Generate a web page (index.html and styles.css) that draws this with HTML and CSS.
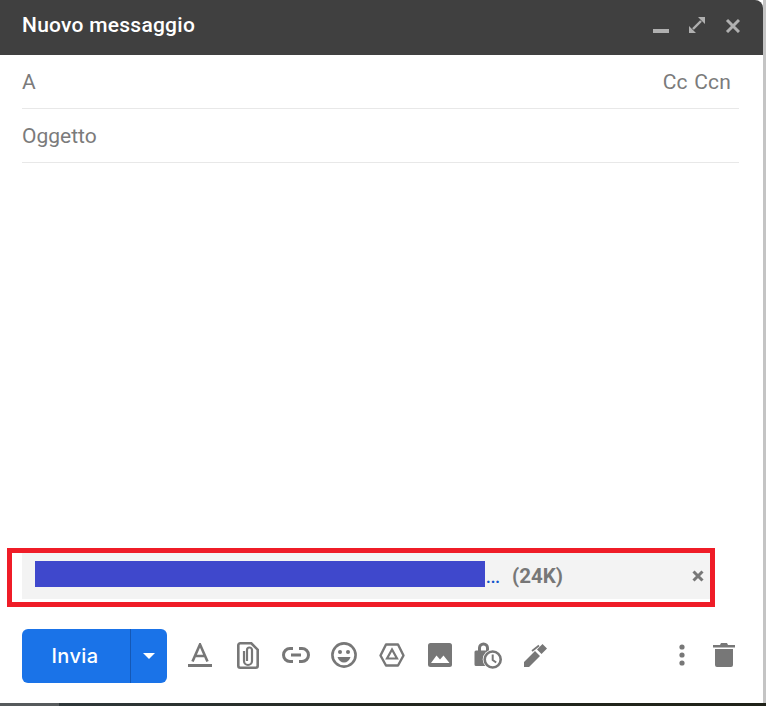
FILE: index.html
```html
<!DOCTYPE html>
<html lang="it">
<head>
<meta charset="utf-8">
<title>Nuovo messaggio</title>
<link rel="stylesheet" href="styles.css">
</head>
<body>
<div class="compose">
  <header class="titlebar">
    <span class="title">Nuovo messaggio</span>
    <div class="winbtns">
      <svg class="ic" width="16" height="16" viewBox="0 0 16 16"><rect x="0" y="12" width="16" height="4" fill="#b0b0b0"/></svg>
      <svg class="ic" width="16" height="16" viewBox="0 0 16 16"><path d="M9 0h7v7zM0 9v7h7z" fill="#b0b0b0"/><path d="M12 4l-8 8" stroke="#b0b0b0" stroke-width="2.400" fill="none"/></svg>
      <svg class="ic" width="15" height="16" viewBox="0 0 15 16"><path d="M2 3l12 12M14 3L2 15" stroke="#b0b0b0" stroke-width="3" fill="none"/></svg>
    </div>
  </header>
  <div class="fields">
    <div class="field"><span>A</span><span class="cc">Cc Ccn</span></div>
    <div class="field"><span>Oggetto</span></div>
  </div>
  <div class="body"></div>
  <div class="highlight">
    <div class="attachment">
      <span class="redact"></span>
      <span class="dots">...</span>
      <span class="size">(24K)</span>
      <svg class="att-x" width="12" height="12" viewBox="0 0 12 12"><path d="M1.500 1.500l9 9M10.500 1.500l-9 9" stroke="#777" stroke-width="3" fill="none"/></svg>
    </div>
  </div>
  <div class="toolbar">
    <div class="send"><span class="send-l">Invia</span><span class="send-r"><i class="caret"></i></span></div>
    <div class="tools">
      <span class="slot"><svg class="ic" width="24" height="24" viewBox="0 0 24 24"><path d="M0 21h24v3H0z" fill="#777"/><path d="M4.500 18.500L12 1.500l7.500 17M7.500 13h9" stroke="#777" stroke-width="2.600" fill="none"/></svg></span>
      <span class="slot"><svg class="ic" width="22" height="27" viewBox="0 0 22 27"><path d="M1.300 3.300a2 2 0 0 1 2-2h11l6.400 6.400v16a2 2 0 0 1-2 2H3.300a2 2 0 0 1-2-2z" fill="none" stroke="#777" stroke-width="2.600"/><path d="M7 9v10a4 4 0 0 0 8 0V8a2.500 2.500 0 0 0-5 0v11" fill="none" stroke="#777" stroke-width="2.200"/></svg></span>
      <span class="slot"><svg class="ic" width="28" height="16" viewBox="0 0 28 16"><path d="M11 1.500H8a6.500 6.500 0 0 0 0 13h3M17 1.500h3a6.500 6.500 0 0 1 0 13h-3M9 8h10" fill="none" stroke="#777" stroke-width="3"/></svg></span>
      <span class="slot"><svg class="ic" width="26" height="26" viewBox="0 0 26 26"><circle cx="13" cy="13" r="11.600" fill="none" stroke="#777" stroke-width="2.600"/><circle cx="9" cy="10" r="2" fill="#777"/><circle cx="17" cy="10" r="2" fill="#777"/><path d="M6.500 15h13c-1 3.500-3.500 5.500-6.500 5.500s-5.500-2-6.500-5.500z" fill="#777"/></svg></span>
      <span class="slot"><svg class="ic" width="26" height="24" viewBox="0 0 26 24"><path d="M7 1.500h12l5.500 11-5.500 10H7l-5.500-10z" fill="none" stroke="#777" stroke-width="2.400" stroke-linejoin="round"/><path d="M13 6.500l-5 9h10z" fill="none" stroke="#777" stroke-width="2.200"/></svg></span>
      <span class="slot"><svg class="ic" width="24" height="24" viewBox="0 0 24 24"><rect width="24" height="24" rx="2.500" fill="#777"/><path d="M3 20l5.500-7.500 3.500 4 3.500-4 6 7.500z" fill="#fff"/></svg></span>
      <span class="slot"><svg class="ic" width="28" height="27" viewBox="0 0 28 27"><path d="M0.500 10a1.500 1.500 0 0 1 1.500-1.500h2V6a5.500 5.500 0 0 1 11 0v2.500h2a1.500 1.500 0 0 1 1.500 1.500v14H2a1.500 1.500 0 0 1-1.500-1.500zM7 8.500h5V6a2.500 2.500 0 0 0-5 0z" fill="#777"/><circle cx="18.700" cy="17.500" r="10" fill="#fff"/><circle cx="18.700" cy="17.500" r="8" fill="none" stroke="#777" stroke-width="2.600"/><path d="M18.700 12.500v5.500l3.500 2.500" fill="none" stroke="#777" stroke-width="2"/></svg></span>
      <span class="slot"><svg class="ic" width="24" height="24" viewBox="0 0 24 24"><path d="M0 24v-5L11 8l5 5L5 24zM13 6.500L18.500 1l4.500 4.500L17.500 11z" fill="#777"/><path d="M8 8l7-5.500" stroke="#777" stroke-width="1.800" fill="none"/></svg></span>
    </div>
    <div class="tools-r">
      <span class="slot-r"><svg class="ic" width="6" height="22" viewBox="0 0 6 22"><circle cx="3" cy="3" r="2.600" fill="#777"/><circle cx="3" cy="11" r="2.600" fill="#777"/><circle cx="3" cy="19" r="2.600" fill="#777"/></svg></span>
      <span class="slot-r"><svg class="ic" width="22" height="24" viewBox="0 0 22 24"><path d="M0 2h7l1-2h6l1 2h7v2.500H0zM2 6h18v16a2 2 0 0 1-2 2H4a2 2 0 0 1-2-2z" fill="#777"/></svg></span>
    </div>
  </div>
</div>
<div class="taskbar"></div>
</body>
</html>
```
FILE: styles.css
```css
* { box-sizing: border-box; }
html, body { margin: 0; padding: 0; }
body {
  width: 766px;
  height: 706px;
  background: #fff;
  display: flex;
  flex-direction: column;
  overflow: hidden;
  font-family: Roboto, "Liberation Sans", sans-serif;
}
.compose {
  width: 766px;
  height: 703px;
  border-right: 3px solid #c4c4c4;
  display: flex;
  flex-direction: column;
  background: #fff;
}
.titlebar {
  height: 55px;
  background: #404040;
  border-top-right-radius: 8px;
  display: flex;
  align-items: center;
  justify-content: space-between;
  padding: 0 23px 5px 22px;
}
.title { color: #fff; font-size: 21px; font-weight: 500; letter-spacing: 0.25px; }
.winbtns { display: flex; align-items: center; gap: 20px; }
.fields { padding: 0 24px 0 22px; }
.field {
  height: 54px;
  border-bottom: 1px solid #e8e8e8;
  display: flex;
  align-items: center;
  justify-content: space-between;
  color: #7b7b7b;
  font-size: 21px;
}
.cc { padding-right: 8px; word-spacing: 1px; letter-spacing: 0.2px; }
.body { flex: 1; }
.highlight {
  width: 708px;
  height: 59px;
  margin-left: 7px;
  border: 5px solid #ef1c27;
  padding: 0 0 3px 10px;
  background: #fff;
}
.attachment {
  height: 100%;
  background: #f3f3f3;
  display: flex;
  align-items: center;
  padding: 0 6px 4px 13px;
}
.redact { width: 450px; height: 26px; background: #3f48cc; }
.dots { color: #1155cc; font-weight: 700; font-size: 16px; width: 27px; padding-top: 6px; padding-left: 1px; }
.size { color: #777; font-weight: 700; font-size: 20.500px; flex: 1; padding-top: 3px; }
.att-x { margin-top: 4px; }
.toolbar {
  height: 54px;
  margin-top: 22px;
  margin-bottom: 20px;
  padding: 0 18px 0 22px;
  display: flex;
  align-items: center;
}
.send {
  width: 145px;
  height: 54px;
  background: #1a73e8;
  border-radius: 6px;
  color: #fff;
  display: flex;
  font-family: Inter, Roboto, sans-serif;
  font-size: 20px;
  font-weight: 500;
  letter-spacing: 0.4px;
}
.send-l { width: 109px; display: flex; align-items: center; justify-content: center; border-right: 1px solid #1558b5; padding-right: 2px; }
.send-r { flex: 1; display: flex; align-items: center; justify-content: center; }
.caret { width: 0; height: 0; border-left: 6.500px solid transparent; border-right: 6.500px solid transparent; border-top: 6.500px solid #fff; }
.tools { display: flex; align-items: center; margin-left: 9px; flex: 1; padding-bottom: 2px; }
.slot { width: 48px; display: flex; justify-content: center; }
.tools-r { display: flex; align-items: center; padding-bottom: 2px; }
.slot-r { width: 42px; display: flex; justify-content: center; }
.ic { flex: none; display: block; }
.taskbar { height: 3px; background: linear-gradient(to right, #565a5c 59px, #2f383a 59px, #22261e 400px, #1f2218); flex: none; }
```
